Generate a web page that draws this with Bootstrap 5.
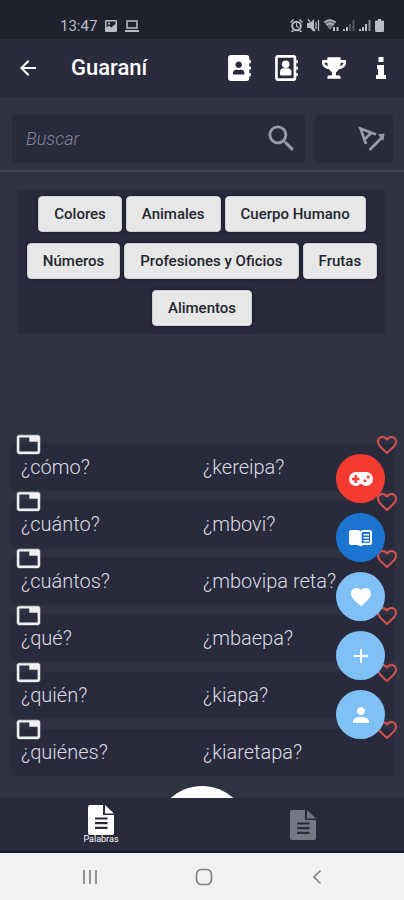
<!DOCTYPE html>
<html lang="es">
<head>
<meta charset="utf-8">
<meta name="viewport" content="width=device-width, initial-scale=1">
<title>Guaraní</title>
<link rel="stylesheet" href="https://cdn.jsdelivr.net/npm/bootstrap@5.3.0/dist/css/bootstrap.min.css">
<style>
body{background:#2f3341;color:#dcdde4;font-family:Roboto,"Liberation Sans",sans-serif}
svg{display:block;fill:currentColor;flex:none}
.status-bar{background:#1f222d;color:#b9bbc8;height:39px;padding:12px 20px 0 60px;font-size:15px;line-height:28px}
.app-bar{background:#2a2b3d;height:58px;padding-left:16px;color:#fff}
.app-title{font-size:22px;line-height:28px;font-weight:500;margin:0 0 0 31px}
.icon-btn{border:0;background:none;color:inherit;padding:0;display:flex;align-items:center;justify-content:center}
.app-action{width:47px;height:48px}
.search-area{padding:17px 11px 7px 12px;gap:10px;border-bottom:2px solid #424855}
.search-box{background:#292a3c;height:49px;padding:0 6px 0 14px;border-radius:4px;color:#9a9ba8}
.search-box input{border:0;background:none;color:#9a9ba8;font-size:18px;font-style:italic;font-weight:300;outline:0;min-width:0;padding:0}
.search-box input::placeholder{color:#858695;opacity:1}
.sort-box{background:#292a3c;width:78px;border-radius:4px;color:#9a9ba8}
.sort-box .icon-btn{padding-left:43px;height:49px}
.category-panel{background:#292a3c;margin:18px 18px 0;padding:6px 4px 8px;gap:11px 4px}
.category{background:#e6e7e6;color:#24252f;border:1px solid #cfd0d4;border-radius:4px;height:36px;padding:0 15px;font-size:15px;line-height:20px;font-weight:500;box-shadow:0 0 3px #15142c}
.word-list{padding:0 10px 24px 12px;margin:110px 0 0;gap:12px;list-style:none}
.word{background:#292a3c;height:45px;box-shadow:0 1px 2px #262838;font-size:20px;line-height:24px;font-weight:300}
.word-es{padding-left:9px}
.word .copy-btn,.word .fav-btn{position:absolute;width:auto}
.copy-btn{left:4px;top:-12px;color:#f0f0f4}
.fav-btn{right:-5px;top:-11px;color:#d9514f}
.fab-stack{position:absolute;right:19px;bottom:59px;gap:10px;z-index:2}
.fab{width:49px;height:49px;border-radius:50%;color:#fff;background:#7fc0f7}
.fab-play{background:#f53b30}
.fab-book{background:#1b74d0}
.round-btn{position:absolute;left:50%;bottom:-82px;width:94px;height:94px;margin-left:-47px;border:0;border-radius:50%;background:#fff}
.tab-bar{background:#292a3c;height:55px;border-bottom:2px solid #181830}
.tab-bar a{color:#fff;text-decoration:none;font-size:9px;line-height:9px}
.tab-bar a.idle{color:#767785}
.system-bar{background:#f1f1f1;height:47px;padding:0 30px 0 33px;color:#828282}
</style>
<script src="https://cdn.jsdelivr.net/npm/bootstrap@5.3.0/dist/js/bootstrap.bundle.min.js"></script>
</head>
<body>
<svg class="d-none" aria-hidden="true">
  <symbol id="tab" viewBox="0 0 24 24"><path d="M21 3H3c-1.1 0-2 .9-2 2v14c0 1.1.9 2 2 2h18c1.1 0 2-.9 2-2V5c0-1.1-.9-2-2-2zm0 16H3V5h10v4h8v10z" stroke="currentColor" stroke-width=".5"/></symbol>
  <symbol id="heart" viewBox="0 0 24 24"><path d="M12.1 18.55l-.1.1-.11-.1C7.14 14.24 4 11.39 4 8.5 4 6.5 5.5 5 7.5 5c1.54 0 3.04 1 3.57 2.36h1.86C13.46 6 14.96 5 16.5 5c2 0 3.5 1.5 3.5 3.5 0 2.89-3.14 5.74-7.9 10.05M16.5 3c-1.74 0-3.41.81-4.5 2.08C10.91 3.81 9.24 3 7.5 3 4.42 3 2 5.41 2 8.5c0 3.77 3.4 6.86 8.55 11.53L12 21.35l1.45-1.32C18.6 15.36 22 12.27 22 8.5 22 5.41 19.58 3 16.5 3z"/></symbol>
  <symbol id="doc" viewBox="0 0 26 30"><path fill-rule="evenodd" d="M2 0h13v10h11v18a2 2 0 0 1-2 2H2a2 2 0 0 1-2-2V2a2 2 0 0 1 2-2zM7 12.500v2h12.500v-2zM7 17v2.300h12.500V17zM7 21.800v2.200h12.500v-2.200zM17 0l9 8.500h-9z"/></symbol>
</svg>
<div class="d-flex flex-column min-vh-100">
  <div class="status-bar d-flex align-items-center">
    <span>13:47</span>
    <svg class="ms-2" width="12" height="12" viewBox="0 0 12 12"><path fill-rule="evenodd" d="M1 0h10a1 1 0 0 1 1 1v10a1 1 0 0 1-1 1H1a1 1 0 0 1-1-1V1a1 1 0 0 1 1-1zm.5 1.500v6L4 5.500l2 2 4.500-3.500V1.500zM3 2.500h2v2H3z"/></svg>
    <svg class="ms-2" width="14" height="12" viewBox="0 0 14 12"><path d="M2 1h10v7H2z" fill="none" stroke="currentColor" stroke-width="1.500"/><path d="M0 10h14v2H0z"/></svg>
    <div class="d-flex align-items-center gap-1 ms-auto">
      <svg width="13" height="13" viewBox="0 0 13 13"><circle cx="6.500" cy="7" r="4.300" fill="none" stroke="currentColor" stroke-width="2"/><path d="M0 3l3-3 1 1-3 3zM13 3l-3-3-1 1 3 3zM6 4h1v3l2 1-.5 1L6 7.700zM2 11l2 1-1 1H1zM11 11l-2 1 1 1h2z"/></svg>
      <svg width="13" height="13" viewBox="0 0 13 13"><path d="M0 4h3l4-4v13L3 9H0z"/><path d="M1 0l7 12M9 3v7M11.500 1v11" fill="none" stroke="currentColor" stroke-width="1.300"/></svg>
      <svg width="15" height="13" viewBox="0 0 15 13"><path d="M0 3q6-5 12 0L6 11z" opacity=".55"/><path d="M0 3.500q6-5 12 0M2.500 6q3.500-3 7 0" fill="none" stroke="currentColor" stroke-width="1.300"/><path d="M9 8h2v4H9zM12.500 8h2v4h-2z"/></svg>
      <svg width="12" height="13" viewBox="0 0 12 13"><path d="M0 10h2v2H0zM3 8h2v4H3z"/><path d="M6 5h2v7H6zM9.500 1h2v11h-2z" opacity=".35"/></svg>
      <svg width="12" height="13" viewBox="0 0 12 13"><path d="M0 10h2v2H0zM3 8h2v4H3zM6 5h2v7H6z"/><path d="M9.500 1h2v11h-2z" opacity=".7"/></svg>
      <svg width="9" height="13" viewBox="0 0 9 13"><path d="M3 0h3v1.500h2a1 1 0 0 1 1 1V12a1 1 0 0 1-1 1H1a1 1 0 0 1-1-1V2.500a1 1 0 0 1 1-1h2z"/></svg>
    </div>
  </div>

  <header class="app-bar d-flex align-items-center">
    <button class="icon-btn" type="button" aria-label="Volver"><svg width="24" height="24" viewBox="0 0 24 24"><path d="M20 11H7.830l5.590-5.590L12 4l-8 8 8 8 1.410-1.410L7.830 13H20v-2z"/></svg></button>
    <h1 class="app-title">Guaraní</h1>
    <div class="d-flex ms-auto">
      <button class="icon-btn app-action" type="button" aria-label="Contactos"><svg width="23" height="26" viewBox="0 0 448 512"><path d="M436 160c6.600 0 12-5.400 12-12v-40c0-6.600-5.400-12-12-12h-20V48c0-26.500-21.500-48-48-48H48C21.500 0 0 21.500 0 48v416c0 26.500 21.500 48 48 48h320c26.500 0 48-21.500 48-48v-48h20c6.600 0 12-5.400 12-12v-40c0-6.600-5.400-12-12-12h-20v-64h20c6.600 0 12-5.400 12-12v-40c0-6.600-5.400-12-12-12h-20v-64h20zm-228-32c35.300 0 64 28.700 64 64s-28.700 64-64 64-64-28.700-64-64 28.700-64 64-64zm112 236.800c0 10.600-10 19.200-22.400 19.200H118.400C106 384 96 375.400 96 364.800v-19.200c0-31.800 30.100-57.600 67.200-57.600h5c12.300 5.100 25.700 8 39.800 8s27.600-2.900 39.800-8h5c37.100 0 67.200 25.800 67.200 57.600v19.200z"/></svg></button>
      <button class="icon-btn app-action" type="button" aria-label="Agenda"><svg width="23" height="26" viewBox="0 0 448 512"><rect x="26" y="26" width="364" height="460" rx="28" fill="none" stroke="currentColor" stroke-width="52"/><path d="M416 96h20q12 0 12 12v40q0 12-12 12h-20zM416 224h20q12 0 12 12v40q0 12-12 12h-20zM416 352h20q12 0 12 12v40q0 12-12 12h-20z"/><circle cx="208" cy="180" r="74"/><path d="M96 384v-64c0-32 30-60 67-60h90c37 0 67 28 67 60v64q0 18-22 18H118q-22 0-22-18z"/></svg></button>
      <button class="icon-btn app-action" type="button" aria-label="Logros"><svg width="24" height="22" viewBox="0 0 576 512"><path d="M552 64H448V24c0-13.300-10.700-24-24-24H152c-13.300 0-24 10.700-24 24v40H24C10.700 64 0 74.700 0 88v56c0 35.700 22.500 72.400 61.900 100.700 31.500 22.700 69.800 37.100 110 41.700C203.300 338.500 240 360 240 360v72h-48c-35.300 0-64 20.700-64 56v12c0 6.600 5.400 12 12 12h296c6.600 0 12-5.400 12-12v-12c0-35.300-28.700-56-64-56h-48v-72s36.700-21.500 68.100-73.600c40.300-4.600 78.600-19 110-41.700 39.300-28.300 61.900-65 61.900-100.700V88c0-13.300-10.700-24-24-24zM99.300 192.800C74.900 175.200 64 155.600 64 144v-16h64.200c1 32.600 5.800 61.200 12.800 86.200-15.100-5.200-29.200-12.400-41.700-21.400zM512 144c0 16.100-17.700 36.100-35.300 48.800-12.500 9-26.700 16.200-41.800 21.400 7-25 11.800-53.600 12.800-86.200H512v16z"/></svg></button>
      <button class="icon-btn app-action" type="button" aria-label="Información"><svg width="10" height="22" viewBox="0 0 10 22"><path d="M2.500 0h5v5h-5zM1 8h7v10h2v4H0v-4h2v-6H1z"/></svg></button>
    </div>
  </header>

  <main class="flex-grow-1 position-relative overflow-hidden">
    <form class="search-area d-flex" onsubmit="return false">
      <div class="search-box d-flex align-items-center flex-grow-1">
        <input class="flex-grow-1" type="text" placeholder="Buscar" aria-label="Buscar">
        <button class="icon-btn" type="submit" aria-label="Buscar"><svg width="35" height="35" viewBox="0 0 24 24"><path d="M15.500 14h-.79l-.28-.27A6.471 6.471 0 0 0 16 9.500 6.500 6.500 0 1 0 9.500 16c1.610 0 3.090-.59 4.230-1.570l.27.28v.79l5 4.990L20.490 19l-4.990-5zm-6 0C7.010 14 5 11.990 5 9.500S7.010 5 9.500 5 14 7.010 14 9.500 11.990 14 9.500 14z"/></svg></button>
      </div>
      <div class="sort-box">
        <button class="icon-btn" type="button" aria-label="Ordenar"><svg width="28" height="26" viewBox="0 0 28 26"><path d="M18 8.500L2.500 2.500 8 18M13.500 6.500L6.500 13.500M11.500 24L24.500 11" fill="none" stroke="currentColor" stroke-width="2.700"/><path d="M20 8.500l6.500-1L25.500 15z"/></svg></button>
      </div>
    </form>

    <div class="category-panel d-flex flex-wrap justify-content-center">
      <button class="category" type="button">Colores</button>
      <button class="category" type="button">Animales</button>
      <button class="category" type="button">Cuerpo Humano</button>
      <button class="category" type="button">Números</button>
      <button class="category" type="button">Profesiones y Oficios</button>
      <button class="category" type="button">Frutas</button>
      <button class="category" type="button">Alimentos</button>
    </div>

    <ul class="word-list d-flex flex-column">
      <li class="word position-relative row g-0 align-items-center"><button class="icon-btn copy-btn" type="button" aria-label="Ficha"><svg width="25" height="25"><use href="#tab"/></svg></button><span class="col-6 word-es">¿cómo?</span><span class="col-6">¿kereipa?</span><button class="icon-btn fav-btn" type="button" aria-label="Favorito"><svg width="24" height="24"><use href="#heart"/></svg></button></li>
      <li class="word position-relative row g-0 align-items-center"><button class="icon-btn copy-btn" type="button" aria-label="Ficha"><svg width="25" height="25"><use href="#tab"/></svg></button><span class="col-6 word-es">¿cuánto?</span><span class="col-6">¿mbovi?</span><button class="icon-btn fav-btn" type="button" aria-label="Favorito"><svg width="24" height="24"><use href="#heart"/></svg></button></li>
      <li class="word position-relative row g-0 align-items-center"><button class="icon-btn copy-btn" type="button" aria-label="Ficha"><svg width="25" height="25"><use href="#tab"/></svg></button><span class="col-6 word-es">¿cuántos?</span><span class="col-6">¿mbovipa reta?</span><button class="icon-btn fav-btn" type="button" aria-label="Favorito"><svg width="24" height="24"><use href="#heart"/></svg></button></li>
      <li class="word position-relative row g-0 align-items-center"><button class="icon-btn copy-btn" type="button" aria-label="Ficha"><svg width="25" height="25"><use href="#tab"/></svg></button><span class="col-6 word-es">¿qué?</span><span class="col-6">¿mbaepa?</span><button class="icon-btn fav-btn" type="button" aria-label="Favorito"><svg width="24" height="24"><use href="#heart"/></svg></button></li>
      <li class="word position-relative row g-0 align-items-center"><button class="icon-btn copy-btn" type="button" aria-label="Ficha"><svg width="25" height="25"><use href="#tab"/></svg></button><span class="col-6 word-es">¿quién?</span><span class="col-6">¿kiapa?</span><button class="icon-btn fav-btn" type="button" aria-label="Favorito"><svg width="24" height="24"><use href="#heart"/></svg></button></li>
      <li class="word position-relative row g-0 align-items-center"><button class="icon-btn copy-btn" type="button" aria-label="Ficha"><svg width="25" height="25"><use href="#tab"/></svg></button><span class="col-6 word-es">¿quiénes?</span><span class="col-6">¿kiaretapa?</span><button class="icon-btn fav-btn" type="button" aria-label="Favorito"><svg width="24" height="24"><use href="#heart"/></svg></button></li>
    </ul>

    <div class="fab-stack d-flex flex-column">
      <button class="icon-btn fab fab-play" type="button" aria-label="Juegos"><svg width="26" height="16" viewBox="0 0 26 16"><path fill-rule="evenodd" d="M8 1h10a7 7 0 0 1 0 14c-2 0-3-1-4-2h-2c-1 1-2 2-4 2A7 7 0 0 1 8 1zM6.500 4v2.800H4v2.400h2.500V12h2.400V9.200h2.500V6.800H8.900V4zM17 8.300a1.500 1.500 0 1 0 0 3 1.500 1.500 0 0 0 0-3zM20.300 4.500a1.500 1.500 0 1 0 0 3 1.500 1.500 0 0 0 0-3z"/></svg></button>
      <button class="icon-btn fab fab-book" type="button" aria-label="Diccionario"><svg width="23" height="18" viewBox="0 0 23 18"><path fill-rule="evenodd" d="M2 1h6q2.500 0 3.500 1.300Q12.500 1 15 1h6q2 0 2 2v11q0 2-2 2h-6q-2.500 0-3.500 1.500Q10.500 16 8 16H2q-2 0-2-2V3q0-2 2-2zM12.700 4v10.500q1-.7 2.500-.7H21V3h-5.500q-2.800 0-2.800 1z"/><path d="M14.500 5H20v1.500h-5.500zM14.500 8H20v1.500h-5.500zM14.500 11H20v1.500h-5.500z"/></svg></button>
      <button class="icon-btn fab" type="button" aria-label="Favoritos"><svg width="24" height="24" viewBox="0 0 24 24"><path d="M12 21.350l-1.450-1.320C5.400 15.360 2 12.280 2 8.500 2 5.420 4.420 3 7.500 3c1.740 0 3.410.81 4.500 2.090C13.090 3.810 14.760 3 16.500 3 19.580 3 22 5.420 22 8.500c0 3.780-3.400 6.860-8.550 11.540z"/></svg></button>
      <button class="icon-btn fab" type="button" aria-label="Agregar"><svg width="24" height="24" viewBox="0 0 24 24"><path d="M19 13h-6v6h-2v-6H5v-2h6V5h2v6h6z"/></svg></button>
      <button class="icon-btn fab" type="button" aria-label="Perfil"><svg width="24" height="24" viewBox="0 0 24 24"><path d="M12 12c2.210 0 4-1.790 4-4s-1.790-4-4-4-4 1.790-4 4 1.790 4 4 4zm0 2c-2.670 0-8 1.340-8 4v2h16v-2c0-2.660-5.330-4-8-4z"/></svg></button>
    </div>
    <button class="round-btn" type="button" aria-label="Cargar más"></button>
  </main>

  <nav class="tab-bar d-flex" aria-label="Secciones">
    <a class="flex-fill w-50 d-flex flex-column align-items-center justify-content-center" href="#palabras"><svg width="26" height="30"><use href="#doc"/></svg><span>Palabras</span></a>
    <a class="idle flex-fill w-50 d-flex flex-column align-items-center justify-content-center" href="#frases" aria-label="Frases"><svg width="26" height="30"><use href="#doc"/></svg></a>
  </nav>
  <div class="system-bar d-flex">
    <button class="icon-btn flex-fill w-100" type="button" aria-label="Recientes"><svg width="16" height="16" viewBox="0 0 16 16"><path d="M2 1v14M8 1v14M14 1v14" stroke="currentColor" stroke-width="1.700"/></svg></button>
    <button class="icon-btn flex-fill w-100" type="button" aria-label="Inicio"><svg width="18" height="18" viewBox="0 0 18 18"><rect x="1.500" y="1.500" width="15" height="15" rx="5" fill="none" stroke="currentColor" stroke-width="1.700"/></svg></button>
    <button class="icon-btn flex-fill w-100" type="button" aria-label="Atrás"><svg width="10" height="16" viewBox="0 0 10 16"><path d="M8.500 1.500L2 8l6.500 6.500" fill="none" stroke="currentColor" stroke-width="1.700"/></svg></button>
  </div>
</div>
</body>
</html>
